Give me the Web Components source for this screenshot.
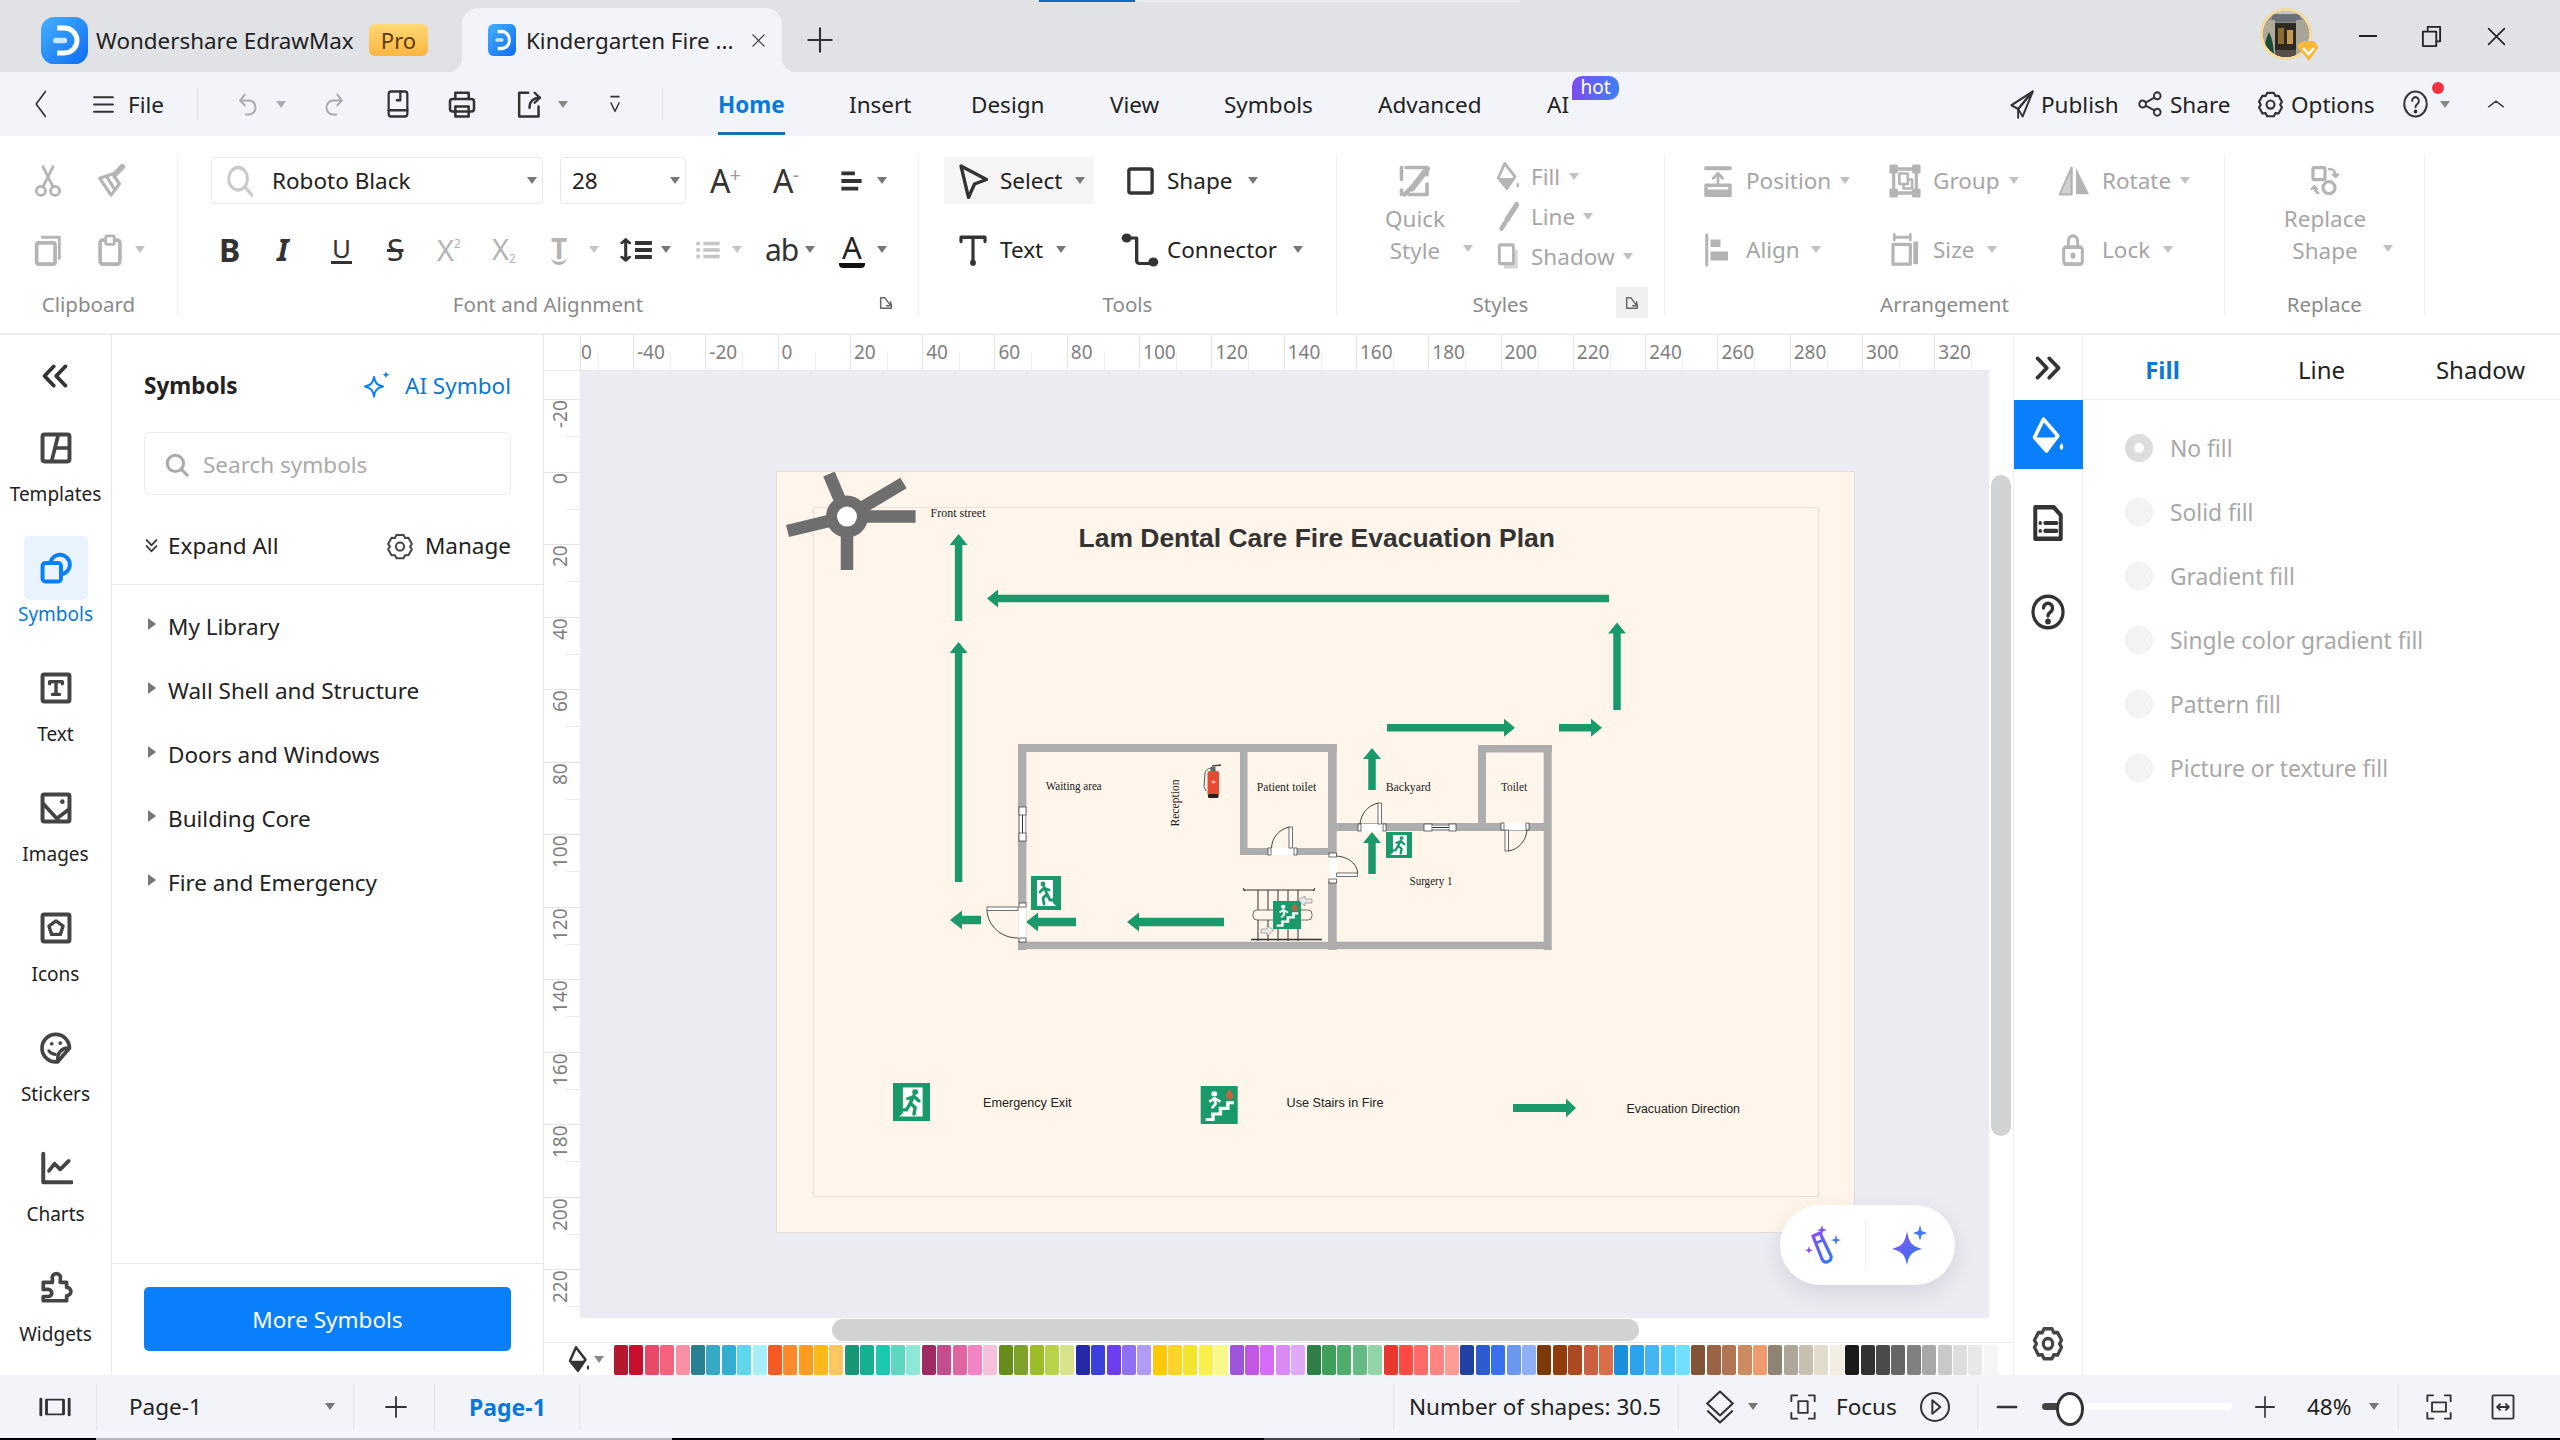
<!DOCTYPE html>
<html lang="en">
<head>
<meta charset="utf-8">
<title>Wondershare EdrawMax</title>
<style>
  html, body { margin: 0; height: 100%; overflow: hidden; background: #fff; }
  body { font-family: "Noto Sans", "Open Sans", sans-serif; font-size: 22.500px; color: #222; }
</style>
</head>
<body>
<app-shell>
  <title-bar></title-bar>
  <menu-bar></menu-bar>
  <ribbon-bar>
    <rb-group name="clipboard">Clipboard</rb-group>
    <rb-group name="font">Font and Alignment</rb-group>
    <rb-group name="tools">Tools</rb-group>
    <rb-group name="styles">Styles</rb-group>
    <rb-group name="arrange">Arrangement</rb-group>
    <rb-group name="replace">Replace</rb-group>
  </ribbon-bar>
  <main-area>
    <left-rail>
      <rail-item icon="templates">Templates</rail-item>
      <rail-item icon="symbols" active>Symbols</rail-item>
      <rail-item icon="text">Text</rail-item>
      <rail-item icon="images">Images</rail-item>
      <rail-item icon="icons">Icons</rail-item>
      <rail-item icon="stickers">Stickers</rail-item>
      <rail-item icon="charts">Charts</rail-item>
      <rail-item icon="widgets">Widgets</rail-item>
    </left-rail>
    <symbol-panel>
      <tree-row>My Library</tree-row>
      <tree-row>Wall Shell and Structure</tree-row>
      <tree-row>Doors and Windows</tree-row>
      <tree-row>Building Core</tree-row>
      <tree-row>Fire and Emergency</tree-row>
    </symbol-panel>
    <canvas-area></canvas-area>
    <right-rail></right-rail>
    <fill-panel>
      <fill-option checked>No fill</fill-option>
      <fill-option>Solid fill</fill-option>
      <fill-option>Gradient fill</fill-option>
      <fill-option>Single color gradient fill</fill-option>
      <fill-option>Pattern fill</fill-option>
      <fill-option>Picture or texture fill</fill-option>
    </fill-panel>
  </main-area>
  <status-bar></status-bar>
  <task-strip></task-strip>
</app-shell>

<script>
const ICONS = {
  back: '<path d="M20 2L5 12l15 10"/>',
  burger: '<path d="M3 5h18M3 12h18M3 19h18"/>',
  undo: '<path d="M8 4L4 9l4 4"/><path d="M4 9h8a6 6 0 0 1 0 12H9"/>',
  redo: '<path d="M16 4l4 5-4 4"/><path d="M20 9h-8a6 6 0 0 0 0 12h3"/>',
  save: '<rect x="4" y="2" width="16" height="20" rx="2"/><path d="M14 2v7h-3"/><path d="M4 17h16"/>',
  print: '<path d="M7 8V3h10v5"/><rect x="3" y="8" width="18" height="10" rx="2"/><rect x="7" y="14" width="10" height="8"/>',
  exportf: '<path d="M11 3H4v19h15v-8"/><path d="M12 15c0-5 3-8 8-8"/><path d="M16 3l4 4-4 4"/>',
  custom: '<path d="M6 4h12"/><path d="M6 11l6 9 6-9"/>',
  cut: '<circle cx="7" cy="19" r="3.2"/><circle cx="17" cy="19" r="3.2"/><path d="M8.5 16L15.5 2M15.5 16L8.5 2"/>',
  painter: '<path d="M4 10l9-3 5 7-6 8z"/><path d="M9 9l5 8" /><path d="M15 7l5-5" stroke-width="4"/>',
  copy: '<rect x="4" y="7" width="13" height="15" rx="1.5" stroke-width="2.6"/><path d="M8 3h12v15"/>',
  paste: '<rect x="5" y="5" width="14" height="17" rx="2" stroke-width="2.6"/><rect x="9" y="2" width="6" height="6" rx="1" fill="#fff"/>',
  search: '<circle cx="10.5" cy="10.5" r="7.5"/><path d="M16 16l5.5 5.5"/>',
  alignl: '<path d="M3 5h12M3 12h18M3 19h15" stroke-width="3.6" stroke-linecap="butt"/>',
  spacing: '<path d="M5 3v18M2.5 6L5 3l2.5 3M2.5 18L5 21l2.5-3" stroke-width="2"/><path d="M11 6h11M11 12h11M11 18h11" stroke-width="3.6" stroke-linecap="butt"/>',
  bullets: '<path d="M8 6h14M8 12h14M8 18h14" stroke-width="3.4" stroke-linecap="butt"/><path d="M2 6h3M2 12h3M2 18h3" stroke-width="3.4" stroke-linecap="butt"/>',
  pointer: '<path d="M4 2l17 9-8 3-4 9z" stroke-width="2.2"/>',
  square: '<rect x="3" y="3" width="18" height="18" rx="1.5" stroke-width="2.6"/>',
  ttool: '<path d="M3 6V3h18v3M12 3v18" stroke-width="2.4"/><circle cx="12" cy="21" r="1.2" fill="currentColor"/>',
  connector: '<circle cx="4" cy="4" r="2" fill="currentColor"/><path d="M6 4h4v15q0 2 2 2h6" stroke-width="2"/><circle cx="20" cy="20" r="2" fill="currentColor"/>',
  launcher: '<path d="M10 4H4v16h16v-6" stroke-width="2.2"/><path d="M11 5l8 11M13 16h6v-6" stroke-width="2.2"/>',
  quick: '<path d="M6 3h14v5M20 14v7H8" stroke-width="2.4"/><path d="M3 3v8M3 18v3" stroke-width="2.4"/><path d="M20 4L10 17" stroke-width="4"/><path d="M9 17l-4 4" stroke-width="3"/>',
  bucket: '<path d="M9 2l9.5 10.5L11 22l-8-8.500z" stroke-width="2.4"/><path d="M4 13.500h14.500L11 22z" fill="currentColor" stroke="none"/><path d="M21 17c1.400 2 1.800 3 0 4.400-1.800-1.400-1.400-2.400 0-4.400z" fill="currentColor" stroke="none"/>',
  pen: '<path d="M20 3L11 15" stroke-width="4.500"/><path d="M9 18l-3 4" stroke-width="4"/>',
  shadow: '<rect x="8" y="7" width="13" height="15" rx="1" fill="currentColor" opacity=".55" stroke="none"/><rect x="4" y="3" width="13" height="15" rx="1" fill="#fff" stroke-width="2.6"/>',
  position: '<path d="M3 3h18" stroke-width="2.8"/><path d="M12 15V7M8.500 10L12 6.500l3.500 3.500" stroke-width="2"/><rect x="3" y="15" width="18" height="7" fill="none" stroke-width="2.600"/><rect x="3" y="18" width="18" height="4" fill="currentColor" stroke="none"/>',
  group: '<rect x="4" y="4" width="16" height="16" stroke-width="2.2"/><rect x="2" y="2" width="4" height="4" fill="currentColor"/><rect x="18" y="2" width="4" height="4" fill="currentColor"/><rect x="2" y="18" width="4" height="4" fill="currentColor"/><rect x="18" y="18" width="4" height="4" fill="currentColor"/><rect x="8" y="7" width="6" height="7" stroke-width="1.800"/><path d="M15 11h2v6h-6v-2" stroke-width="1.800"/>',
  rotate: '<path d="M10 2v20H2z" fill="none" stroke-width="1.600"/><path d="M10 4L3 22h7z" fill="currentColor" stroke="none" opacity=".6"/><path d="M13 2v20h9z" fill="currentColor" stroke="none"/>',
  align: '<path d="M3 2v20" stroke-width="2.400"/><rect x="6" y="5" width="8" height="5" fill="currentColor" stroke="none"/><rect x="6" y="13" width="14" height="6" fill="currentColor" stroke="none"/>',
  size: '<path d="M4 3h12M4 1v4M16 1v4" stroke-width="2"/><rect x="3" y="8" width="13" height="14" stroke-width="2.400"/><path d="M20 6v16" stroke-width="3.600" stroke-linecap="butt"/>',
  lock: '<rect x="4" y="10" width="16" height="12" rx="2" stroke-width="2.600"/><path d="M8 10V6a4 4 0 0 1 8 0v4" stroke-width="2.400"/><circle cx="12" cy="16" r="1.200" fill="currentColor"/>',
  replace: '<rect x="3" y="2" width="9" height="9" rx="1" stroke-width="2.400"/><circle cx="15" cy="17" r="4.500" stroke-width="2.400"/><path d="M15 3c3 0 5 2 5 5M18 7l2 2 2-2" stroke-width="1.800"/><path d="M7 21c-2-.5-3-2-3-5M2 18l2-2 2 2" stroke-width="1.800"/>',
  plane: '<path d="M22 2L3 13l6 3z"/><path d="M22 2l-9 20-4-6z"/><path d="M9 16v7"/>',
  share: '<circle cx="5" cy="12" r="3"/><circle cx="18" cy="5" r="3"/><circle cx="18" cy="19" r="3"/><path d="M8 10.500l7.500-4M8 13.500l7.500 4"/>',
  gear: '<path d="M9 2.500h6l1.300 2.600 2.900-.1 3 5.200-1.600 2.300 1.600 2.300-3 5.200-2.900-.1L15 22.500H9l-1.300-2.600-2.900.1-3-5.200 1.600-2.300-1.600-2.300 3-5.200 2.900.1z"/><circle cx="12" cy="12.500" r="3.500"/>',
  help: '<ellipse cx="12" cy="12" rx="10" ry="10"/><path d="M9 9.500a3 3 0 1 1 4.500 2.600c-1 .6-1.500 1.200-1.500 2.400"/><circle cx="12" cy="18" r=".8" fill="currentColor"/>',
  caret: '<path d="M4 17l8-10 8 10"/>',
  templates: '<rect x="2.500" y="2.500" width="19" height="19" rx="1.500" stroke-width="2.800"/><path d="M13.500 3L9 21M11.500 12H21" stroke-width="2.600" stroke-linecap="butt"/>',
  symbols: '<rect x="2.500" y="8.500" width="13" height="13" rx="2" stroke-width="2.800"/><path d="M8 8a7 7 0 1 1 8 8.500" stroke-width="2.800"/>',
  text: '<rect x="2.500" y="2.500" width="19" height="19" rx="1" stroke-width="2.800"/><path d="M7.500 9V7.500h9V9M12 7.500v9M9.500 16.500h5" stroke-width="2.400"/>',
  images: '<rect x="2.500" y="2.500" width="19" height="19" rx="1" stroke-width="2.800"/><path d="M3 9l11 12M13 19l8-6" stroke-width="2.600"/><circle cx="16.500" cy="7.500" r="1.600" fill="currentColor" stroke="none"/>',
  icons: '<rect x="2.500" y="2.500" width="19" height="19" rx="1" stroke-width="2.800"/><path d="M12 7l5 3.600-1.900 5.900H8.900L7 10.600z" stroke-width="2.400"/>',
  stickers: '<path d="M21.500 12a9.700 9.700 0 1 0-8.300 9.700z" stroke-width="2.600"/><path d="M21.500 12c-5.500-.5-9 3.500-8.300 9.700" stroke-width="2.400"/><circle cx="9" cy="9" r="1.300" fill="currentColor" stroke="none"/><circle cx="15" cy="8.500" r="1.300" fill="currentColor" stroke="none"/><path d="M7 14c1 1.300 2.500 2.300 4.500 2.500" stroke-width="2.200"/>',
  charts: '<path d="M3 2v20h20" stroke-width="2.800"/><path d="M7 14l4-5 4 4 6-6" stroke-width="2.600"/>',
  widgets: '<path d="M9.500 6a3 3 0 1 1 5.500 0v2h4.500v3.500a3 3 0 0 1 0 6V21H3v-3h3.500a2.500 2.500 0 0 0 0-5H3V8h6.500z" stroke-width="2.600"/>',
  dleft: '<path d="M11 3l-8 9 8 9M21 3l-8 9 8 9" stroke-width="3.200"/>',
  dright: '<path d="M3 3l8 9-8 9M13 3l8 9-8 9" stroke-width="3.200"/>',
  ddown: '<path d="M4 4l8 7 8-7M4 12l8 7 8-7" stroke-width="2.400"/>',
  doc: '<path d="M3 2h13l5 5v15H3z" stroke-width="2.800"/><path d="M10 12h8M10 17h8" stroke-width="2.600"/><circle cx="6.500" cy="12" r="1.200" fill="currentColor" stroke="none"/><circle cx="6.500" cy="17" r="1.200" fill="currentColor" stroke="none"/>',
  panel: '<path d="M2 3v18M22 3v18" stroke-width="2"/><rect x="6" y="4" width="12" height="16" stroke-width="2"/>',
  plus: '<path d="M12 2v20M2 12h20"/>',
  layers: '<path d="M12 1l9 8.500-9 8.500-9-8.500z"/><path d="M3.500 15l8.500 8 8.500-8"/>',
  focus: '<path d="M7 2H2v5M17 2h5v5M7 22H2v-5M17 22h5v-5"/><rect x="8" y="7" width="8" height="10"/>',
  play: '<circle cx="12" cy="12" r="10.500"/><path d="M10 7l6 5-6 5z"/>',
  minus: '<path d="M2 12h20" stroke-width="2.600"/>',
  fit: '<path d="M7 2H2v5M17 2h5v5M7 22H2v-5M17 22h5v-5"/><rect x="6" y="8" width="12" height="8"/>',
  fitw: '<rect x="3" y="2" width="18" height="20" rx="1"/><path d="M7 12h10M9.500 9.500L7 12l2.500 2.500M14.500 9.500L17 12l-2.500 2.500"/>',
  minimize: '<path d="M2 12h20" stroke-width="2.200"/>',
  restore: '<rect x="3" y="7" width="14" height="15" stroke-width="1.900"/><path d="M8 6V2h13v15h-4" stroke-width="1.900"/>',
  closex: '<path d="M3 3l18 18M21 3L3 21" stroke-width="1.900"/>'
};

// inline svg from the icon table
const ic = (name, w, h = w, color = '#333', sw = 2) =>
  `<svg width="${w}" height="${h}" viewBox="0 0 24 24" fill="none" stroke="currentColor" stroke-width="${sw}" stroke-linecap="round" stroke-linejoin="round" preserveAspectRatio="none" style="display:block;flex:none;color:${color}">${ICONS[name]}</svg>`;

// row of cells that begin at given x values, each cell runs up to the next one
const cells = (start, items) => {
  let out = '';
  if (items[0][0] > start) out += `<div class="c" style="width:${items[0][0] - start}px"></div>`;
  items.forEach((it, i) => {
    const w = items[i + 1] ? (items[i + 1][0] - it[0]) + 'px' : 'auto';
    out += `<div class="c" style="width:${w};${it[2] || ''}">${it[1]}</div>`;
  });
  return out;
};

const ar = (c = '#888') => `<i class="ar" style="border-top-color:${c}"></i>`;
const BASE = `
  :host { display: block; box-sizing: border-box; }
  * { box-sizing: border-box; }
  .c { flex: none; display: flex; align-items: center; height: 100%; white-space: nowrap; }
  .ar { display: block; width: 0; height: 0; border-left: 5px solid transparent; border-right: 5px solid transparent; border-top: 7px solid #888; }
  .div { width: 1px; height: 46px; background: #e2e4ea; }
`;

class Part extends HTMLElement {
  constructor() {
    super();
    this.attachShadow({ mode: 'open' });
  }
  connectedCallback() {
    this.shadowRoot.innerHTML = `<style>${BASE}${this.css()}</style>${this.html()}`;
  }
  css() { return ''; }
  html() { return '<slot></slot>'; }
}

class AppShell extends Part {
  css() { return `:host { width: 2560px; height: 1440px; display: flex; flex-direction: column; }`; }
}

class TitleBar extends Part {
  css() {
    return `
      :host { height: 72px; background: #e0e2e6; position: relative; font-size: 22.400px; }
      .bar { display: flex; height: 100%; padding-top: 8px; }
      .pro { width: 59px; height: 32px; border-radius: 6px; background: linear-gradient(#ffd975, #fbb540); color: #5b3c00; display: flex; align-items: center; justify-content: center; font-size: 22px; }
      .tab { width: 320px; height: 64px; background: #f2f4f9; border-radius: 16px 16px 0 0; display: flex; align-items: center; padding-left: 26px; position: relative; }
      .tab::before, .tab::after { content: ""; position: absolute; bottom: 0; width: 14px; height: 14px; }
      .tab::before { left: -14px; background: radial-gradient(circle at 0 0, transparent 14px, #f2f4f9 14.500px); }
      .tab::after { right: -14px; background: radial-gradient(circle at 100% 0, transparent 14px, #f2f4f9 14.500px); }
      .tab span { margin-left: 10px; width: 225px; }
      .load { position: absolute; left: 1039px; top: 0; width: 96px; height: 2px; background: #0a6ac8; }
      .load2 { position: absolute; left: 1135px; top: 0; width: 385px; height: 2px; background: #e9ebee; }
    `;
  }
  html() {
    const logo = (w, h, r) => `<svg width="${w}" height="${h}" viewBox="0 0 32 32" preserveAspectRatio="none" style="display:block;flex:none"><defs><linearGradient id="lg${w}" x1="0" y1="0" x2="1" y2="1"><stop offset="0" stop-color="#45b0ff"/><stop offset="1" stop-color="#0d6df3"/></linearGradient></defs><rect width="32" height="32" rx="${r}" fill="url(#lg${w})"/><path d="M11 7.500h5a8.500 8.500 0 0 1 0 17h-5" fill="none" stroke="#fff" stroke-width="3.400"/><path d="M10 16h6" stroke="#cfe6ff" stroke-width="3.600" stroke-linecap="round"/></svg>`;
    const avatar = `<svg width="58" height="60" viewBox="0 0 58 60" style="display:block"><defs><clipPath id="av"><circle cx="26" cy="28" r="23"/></clipPath></defs>
      <circle cx="26" cy="28" r="26" fill="#f4dca0"/>
      <g clip-path="url(#av)"><rect width="58" height="60" fill="#8d8f8c"/><rect x="0" y="0" width="58" height="10" fill="#c9c8c0"/><rect x="12" y="8" width="28" height="8" fill="#6c7078"/>
      <rect x="3" y="14" width="12" height="40" fill="#b0aa9a"/><rect x="36" y="14" width="14" height="40" fill="#a8a498"/><rect x="15" y="17" width="21" height="36" fill="#2e2a22"/><rect x="18" y="22" width="6" height="16" fill="#8c6a30"/><rect x="27" y="24" width="6" height="14" fill="#c49a50"/><rect x="15" y="44" width="21" height="10" fill="#55504a"/>
      <path d="M9 26c3 6 5 14 5 26H4c0-12 2-20 5-26z" fill="#1d4a33"/></g>
      <path d="M38 38l6-3h10l4 5v2L49 55 38 42z" fill="#f6b93c"/><path d="M43 42l5.500 6 5.500-6" fill="none" stroke="#fff" stroke-width="2.200"/></svg>`;
    const up = 'margin-top:-8px;height:72px';
    return `<div class="bar">${cells(0, [
      [41, logo(47, 47, 9)],
      [96, 'Wondershare EdrawMax'],
      [369, '<div class="pro">Pro</div>'],
      [462, `<div class="tab">${logo(28, 32, 6)}<span>Kindergarten Fire ...</span>${ic('closex', 15, 15, '#333')}</div>`, 'align-items:flex-end'],
      [806, ic('plus', 28, 28, '#333', 1.8)],
      [2260, avatar, up],
      [2358, ic('minimize', 20, 20, '#222'), up],
      [2420, ic('restore', 23, 23, '#222'), up],
      [2486, ic('closex', 21, 21, '#222'), up]
    ])}</div><i class="load"></i><i class="load2"></i>`;
  }
}

class MenuBar extends Part {
  css() {
    return `
      :host { height: 64px; background: #f2f4f9; }
      .bar { display: flex; height: 100%; }
      .home { color: #0a78d8; font-weight: 700; position: relative; height: 100%; display: flex; align-items: center; }
      .home::after { content: ""; position: absolute; left: 0; right: 0; bottom: 1px; height: 3px; background: #1a6fa8; }
      .ai { position: relative; }
      .hot { position: absolute; left: 25px; top: -13px; width: 47px; height: 24px; border-radius: 10px 10px 10px 0; background: linear-gradient(90deg, #7d4cf0, #3f7ff3); color: #fff; font-size: 19px; line-height: 22px; text-align: center; }
      .dot { position: absolute; left: 30px; top: -7px; width: 12px; height: 12px; border-radius: 50%; background: #f5333f; }
      .help { position: relative; display: block; }
      .vd { width: 1px; height: 32px; background: #e0e2e8; }
    `;
  }
  html() {
    return `<div class="bar">${cells(0, [
      [33, ic('back', 15, 30, '#333', 1.800)],
      [91, ic('burger', 25, 25, '#333', 2)],
      [128, 'File'],
      [197, '<i class="vd"></i>'],
      [236, ic('undo', 26, 28, '#aaa', 1.800)],
      [276, ar('#aaa')],
      [320, ic('redo', 26, 28, '#aaa', 1.800)],
      [384, ic('save', 28, 30, '#333', 1.900)],
      [446, ic('print', 32, 30, '#333', 1.900)],
      [514, ic('exportf', 31, 30, '#333', 1.900)],
      [558, ar('#888')],
      [607, ic('custom', 16, 22, '#333', 2)],
      [662, '<i class="vd"></i>'],
      [718, '<span class="home">Home</span>'],
      [849, 'Insert'],
      [971, 'Design'],
      [1110, 'View'],
      [1224, 'Symbols'],
      [1378, 'Advanced'],
      [1547, '<span class="ai">AI<span class="hot">hot</span></span>'],
      [2008, ic('plane', 27, 30, '#333', 1.700)],
      [2041, 'Publish'],
      [2137, ic('share', 27, 28, '#333', 1.700)],
      [2170, 'Share'],
      [2257, ic('gear', 27, 28, '#333', 1.900)],
      [2291, 'Options'],
      [2402, `<span class="help">${ic('help', 27, 30, '#333', 1.700)}<i class="dot"></i></span>`],
      [2440, ar('#888')],
      [2485, ic('caret', 22, 14, '#333', 1.800)]
    ])}</div>`;
  }
}

class RibbonBar extends Part {
  css() {
    return `:host { height: 199px; background: #fff; border-bottom: 2px solid #eeeeee; display: flex; }`;
  }
}

// ribbon content per group
const DIM = '#b4b4b4', INK = '#333', GREY_TXT = '#a6a6a6';
const txt = (s, c) => `<span style="color:${c}">${s}</span>`;
const glyph = (s, css) => `<span style="line-height:1;${css}">${s}</span>`;
const GROUPS = {
  clipboard: {
    x: 0, w: 178, rows: [
      [[31, ic('cut', 34, 34, DIM, 2)], [94, ic('painter', 34, 34, DIM, 2.200)]],
      [[31, ic('copy', 34, 34, DIM, 2)], [93, ic('paste', 34, 34, DIM, 2)], [135, ar('#c4c4c4')]]
    ]
  },
  font: {
    x: 178, w: 741, launcher: true, rows: [
      [
        [211, `<div class="box" style="width:332px"><span class="sr">${ic('search', 30, 36, '#c8c8c8', 2.200)}</span><span class="bt">Roboto Black</span>${ar('#777')}</div>`],
        [560, `<div class="box" style="width:126px"><span class="bt2">28</span>${ar('#777')}</div>`],
        [710, `<span class="aa">A<sup>+</sup></span>`],
        [773, `<span class="aa">A<sup>-</sup></span>`],
        [838, ic('alignl', 27, 26, INK, 2)],
        [877, ar('#777')]
      ],
      [
        [219, glyph('B', 'font-size:32px;font-weight:700;color:#333')],
        [277, glyph('I', 'font-size:30px;font-weight:700;font-style:italic;color:#333')],
        [331, glyph('U', 'font-size:26px;color:#333;border-bottom:3px solid #333;padding:0 1px')],
        [382, glyph('S', 'font-size:30px;color:#333;text-decoration:line-through;padding:0 5px')],
        [437, glyph('X<sup style="font-size:12px;vertical-align:13px">2</sup>', `font-size:29px;color:${DIM}`)],
        [492, glyph('X<sub style="font-size:12px;vertical-align:-3px">2</sub>', `font-size:29px;color:${DIM}`)],
        [551, glyph('T', `font-size:28px;font-weight:700;color:${DIM};border-bottom:3px solid ${DIM};border-radius:0 0 8px 8px`)],
        [589, ar('#c4c4c4')],
        [618, ic('spacing', 37, 28, INK, 2)],
        [661, ar('#777')],
        [694, ic('bullets', 28, 26, '#c4c4c4', 2)],
        [732, ar('#c4c4c4')],
        [765, glyph('ab', 'font-size:30px;color:#333;letter-spacing:-1px')],
        [805, ar('#777')],
        [839, glyph('A', 'font-size:31px;color:#222;border-bottom:5px solid #111;padding:0 3px;border-radius:0 0 4px 4px')],
        [877, ar('#777')]
      ]
    ]
  },
  tools: {
    x: 919, w: 418, rows: [
      [
        [944, `<div class="sel">${ic('pointer', 36, 36, INK, 2)}<span style="margin-left:9px;margin-right:13px">Select</span>${ar('#777')}</div>`],
        [1125, ic('square', 31, 32, INK, 2)],
        [1167, 'Shape'],
        [1248, ar('#777')]
      ],
      [
        [957, ic('ttool', 32, 34, INK, 2)],
        [1000, 'Text'],
        [1056, ar('#777')],
        [1120, ic('connector', 40, 36, INK, 2)],
        [1167, 'Connector'],
        [1293, ar('#777')]
      ]
    ]
  },
  styles: {
    x: 1337, w: 328, launcher: true, hot: true,
    body: `<div class="stack" style="margin-left:48px;width:60px">
        <span class="ico" style="margin:6px 0 4px">${ic('quick', 36, 36, DIM, 2)}</span>
        <span class="ln" style="color:${GREY_TXT}">Quick</span><span class="ln" style="color:${GREY_TXT}">Style</span>
      </div>
      <div style="width:50px;padding:88px 0 0 18px">${ar('#c0c0c0')}</div>
      <div class="tri">
        <div class="row3">${cells(1495, [[1495, ic('bucket', 26, 30, DIM, 2)], [1531, txt('Fill', GREY_TXT)], [1569, ar('#c0c0c0')]])}</div>
        <div class="row3">${cells(1495, [[1495, ic('pen', 26, 30, DIM, 2)], [1531, txt('Line', GREY_TXT)], [1583, ar('#c0c0c0')]])}</div>
        <div class="row3">${cells(1495, [[1495, ic('shadow', 26, 30, DIM, 2)], [1531, txt('Shadow', GREY_TXT)], [1623, ar('#c0c0c0')]])}</div>
      </div>`
  },
  arrange: {
    x: 1665, w: 560, rows: [
      [
        [1702, ic('position', 32, 34, DIM, 2)], [1746, txt('Position', GREY_TXT)], [1840, ar('#c0c0c0')],
        [1888, ic('group', 34, 36, DIM, 2)], [1933, txt('Group', GREY_TXT)], [2009, ar('#c0c0c0')],
        [2057, ic('rotate', 35, 32, DIM, 2)], [2102, txt('Rotate', GREY_TXT)], [2180, ar('#c0c0c0')]
      ],
      [
        [1703, ic('align', 30, 36, DIM, 2)], [1746, txt('Align', GREY_TXT)], [1811, ar('#c0c0c0')],
        [1889, ic('size', 32, 34, DIM, 2)], [1933, txt('Size', GREY_TXT)], [1987, ar('#c0c0c0')],
        [2059, ic('lock', 28, 34, DIM, 2)], [2102, txt('Lock', GREY_TXT)], [2163, ar('#c0c0c0')]
      ]
    ]
  },
  replace: {
    x: 2225, w: 199.500,
    body: `<div class="stack" style="margin-left:60px;width:80px">
        <span class="ico" style="margin:8px 0 6px">${ic('replace', 32, 32, DIM, 2)}</span>
        <span class="ln" style="color:${GREY_TXT}">Replace</span><span class="ln" style="color:${GREY_TXT}">Shape</span>
      </div>
      <div style="padding:88px 0 0 18px">${ar('#c0c0c0')}</div>`
  }
};

class RbGroup extends Part {
  css() {
    const g = GROUPS[this.getAttribute('name')];
    return `
      :host { flex: none; width: ${g.w}px; height: 160px; margin-top: 19px; border-right: 1px solid #eeeeee; }
      .body { height: 118px; padding-top: 2px; display: flex; }
      .rows { display: flex; flex-direction: column; gap: 22px; }
      .row { display: flex; height: 47px; }
      .label { height: 30px; margin-top: 16px; text-align: center; line-height: 30px; font-size: 20.500px; color: #8a8a8a; position: relative; }
      .launch { position: absolute; right: 16px; top: -2px; width: 32px; height: 31px; display: flex; align-items: center; justify-content: center; ${g.hot ? 'background:#f0f0f0;' : ''} }
      .box { height: 47px; border: 1px solid #e8e8e8; border-radius: 4px; display: flex; align-items: center; padding-right: 5px; }
      .sr { margin-left: 13px; }
      .bt { margin-left: 17px; flex: 1; }
      .bt2 { margin-left: 11px; flex: 1; }
      .aa { font-size: 32px; color: #333; line-height: 1; }
      .aa sup { font-size: 20px; color: #999; vertical-align: 11px; line-height: 0; margin-left: -1px; }
      .sel { width: 150px; height: 47px; background: #f5f5f5; display: flex; align-items: center; padding-left: 11px; }
      .stack { display: flex; flex-direction: column; align-items: center; flex: none; }
      .ln { height: 32px; line-height: 32px; }
      .ico { display: block; }
      .tri { display: flex; flex-direction: column; margin-top: -1px; }
      .row3 { display: flex; height: 40px; flex: none; }
    `;
  }
  html() {
    const g = GROUPS[this.getAttribute('name')];
    const body = g.body || `<div class="rows">${g.rows.map(r => `<div class="row">${cells(g.x, r)}</div>`).join('')}</div>`;
    const launch = g.launcher ? `<span class="launch">${ic('launcher', 16, 16, '#666', 2)}</span>` : '';
    return `<div class="body">${body}</div><div class="label"><slot></slot>${launch}</div>`;
  }
}

class MainArea extends Part {
  css() { return `:host { height: 1040px; display: flex; }`; }
}

class LeftRail extends Part {
  css() {
    return `
      :host { flex: none; width: 112px; border-right: 1px solid #e8e8e8; }
      .top { height: 81px; display: flex; align-items: center; justify-content: center; padding-right: 1px; }
    `;
  }
  html() { return `<div class="top">${ic('dleft', 28, 26, '#333', 2)}</div><slot></slot>`; }
}

class RailItem extends Part {
  css() {
    const on = this.hasAttribute('active');
    return `
      :host { height: 120px; text-align: center; font-size: 19px; color: ${on ? '#0a78d8' : '#222'}; }
      .ico { width: 64px; height: 64px; margin: 0 auto; border-radius: 6px; display: flex; align-items: center; justify-content: center; background: ${on ? '#eaf4ff' : 'transparent'}; }
      .lbl { line-height: 26px; margin-top: 1px; }
    `;
  }
  html() {
    const on = this.hasAttribute('active');
    return `<div class="ico">${ic(this.getAttribute('icon'), 34, 34, on ? '#0a7ffb' : '#444', 2)}</div><div class="lbl"><slot></slot></div>`;
  }
}

class SymbolPanel extends Part {
  css() {
    return `
      :host { flex: none; width: 432px; display: flex; flex-direction: column; border-right: 1px solid #e8e8e8; }
      .pad { padding: 0 32px 0 32px; }
      .head { height: 97px; padding-top: 4px; display: flex; align-items: center; justify-content: space-between; }
      .head b { font-size: 22.500px; color: #222; }
      .ai { color: #0a78d8; display: flex; align-items: center; gap: 12px; font-size: 22.500px; }
      .search { height: 63px; border: 1px solid #eaeaea; border-radius: 6px; display: flex; align-items: center; padding: 2px 0 0 19px; gap: 13px; color: #aaa; font-size: 22.500px; }
      .tools { height: 89px; padding-top: 12px; display: flex; align-items: center; font-size: 22.500px; }
      .tools .e { display: flex; align-items: center; gap: 9px; }
      .tools .m { display: flex; align-items: center; gap: 11px; margin-left: auto; }
      .list { padding-top: 9px; flex: 1; }
      .foot { height: 112px; border-top: 1px solid #eaeaea; padding-top: 23px; }
      .btn { height: 64px; background: #0a7ffb; color: #fff; border-radius: 5px; display: flex; align-items: center; justify-content: center; font-size: 22.500px; }
    `;
  }
  html() {
    const star = `<svg width="32" height="32" viewBox="0 0 32 32" style="display:block"><path d="M13 7c1 6 3 8 9 9.500-6 1.500-8 3.500-9 10-1-6.500-3-8.500-9-10 6-1.500 8-3.500 9-9.500z" fill="none" stroke="#0a7ffb" stroke-width="2" stroke-linejoin="round"/><path d="M25 1c.4 2.400 1.100 3.200 3.500 3.700-2.400.5-3.100 1.300-3.500 3.700-.4-2.400-1.100-3.200-3.500-3.700 2.400-.5 3.100-1.300 3.500-3.700z" fill="#0a7ffb"/></svg>`;
    return `
      <div class="pad head"><b>Symbols</b><span class="ai">${star}AI Symbol</span></div>
      <div class="pad"><div class="search">${ic('search', 26, 26, '#aaa', 2.800)}<span>Search symbols</span></div></div>
      <div class="pad"><div class="tools"><span class="e">${ic('ddown', 15, 18, '#333', 2)}Expand All</span><span class="m">${ic('gear', 28, 28, '#444', 1.700)}Manage</span></div></div>
      <div style="border-top:1px solid #eaeaea"></div>
      <div class="list"><slot></slot></div>
      <div class="foot pad"><div class="btn">More Symbols</div></div>`;
  }
}

class TreeRow extends Part {
  css() {
    return `
      :host { height: 64px; display: flex; align-items: center; padding-left: 36px; font-size: 22.500px; color: #222; }
      i { width: 0; height: 0; border-top: 6px solid transparent; border-bottom: 6px solid transparent; border-left: 8px solid #777; margin-right: 12px; margin-top: -4px; }
    `;
  }
  html() { return `<i></i><span><slot></slot></span>`; }
}

class RulerH extends Part {
  css() {
    return `
      :host { height: 36px; overflow: hidden; background: #fff; border-bottom: 1px solid #e8e8e8; font-size: 19px; color: #808080; }
      .r { display: flex; height: 100%; }
      .t { flex: none; width: 72.300px; height: 100%; border-left: 1px solid #e4e4e4; padding-left: 3px; line-height: 34px; position: relative; }
      .t::after { content: ""; position: absolute; left: 36px; bottom: 0; width: 1px; height: 18px; background: #eeeeee; }
      .t.first { width: 53px; padding-left: 0; }
      .t.first::after { left: 17px; }
    `;
  }
  html() {
    let s = '<div class="t first">0</div>';
    for (let v = -40; v <= 320; v += 20) s += `<div class="t">${v}</div>`;
    return `<div class="r">${s}</div>`;
  }
}

class RulerV extends Part {
  css() {
    return `
      :host { width: 36px; overflow: hidden; background: #fff; font-size: 19px; color: #808080; }
      .r { padding-top: 28px; }
      .t { height: 72.500px; border-top: 1px solid #e4e4e4; position: relative; padding-left: 4px; }
      .t::after { content: ""; position: absolute; right: 0; top: 36px; width: 14px; height: 1px; background: #e8e8e8; }
      .t span { display: block; writing-mode: vertical-rl; transform: rotate(180deg); line-height: 24px; width: 24px; height: 40px; text-align: right; }
    `;
  }
  html() {
    let s = '';
    for (let v = -20; v <= 220; v += 20) s += `<div class="t"><span>${v}</span></div>`;
    return `<div class="r">${s}</div>`;
  }
}

const SIGN_MAN = `<rect x="8" y="4" width="16" height="26" fill="#fff"/><path d="M5 30l3-3v3z" fill="#fff"/><circle cx="18" cy="8" r="2.400" fill="#1a9a6b"/><path d="M17 11l-3 7 4 4-1 6M14 18l-3 6H7M17 12l-5 2M17 12l4 4" fill="none" stroke="#1a9a6b" stroke-width="2.800" stroke-linecap="round" stroke-linejoin="round"/>`;
const SIGN_STAIR = `<path d="M4 30h6v-5h6v-5h6v-5h5" fill="none" stroke="#fff" stroke-width="2.800"/><circle cx="11" cy="7" r="2.400" fill="#fff"/><path d="M11 10l1 6-3 4M11 11l5 3M11 11l-4 3" fill="none" stroke="#fff" stroke-width="2.200"/><path d="M23 3c3 3 4 6 3 8-1 1.500-4 1.500-5 0-1-2 0-5 2-8z" fill="#c4633f"/>`;

class FloorPlan extends Part {
  css() {
    return `
      :host { position: absolute; left: 197px; top: 101px; width: 1077px; height: 760px; background: #fff5ea; box-shadow: 0 0 0 1px #e2ddd6; }
      svg { display: block; }
      text { font-family: "Liberation Serif", serif; font-size: 13px; fill: #222; }
      .s { font-family: "Liberation Sans", sans-serif; font-size: 12px; }
      .t { font-family: "Liberation Sans", sans-serif; font-size: 26px; font-weight: 700; fill: #333; }
    `;
  }
  html() {
    const G = '#adadad', A = '#1a9a6b';
    const arrow = (x1, y1, x2, y2, sw = 7.500, hw = 18, hl = 11) => {
      const p = [];
      if (y1 === y2) {
        const d = x2 > x1 ? 1 : -1, b = x2 - d * hl;
        p.push([x1, y1 - sw / 2], [b, y1 - sw / 2], [b, y1 - hw / 2], [x2, y1], [b, y1 + hw / 2], [b, y1 + sw / 2], [x1, y1 + sw / 2]);
      } else {
        const d = y2 > y1 ? 1 : -1, b = y2 - d * hl;
        p.push([x1 - sw / 2, y1], [x1 - sw / 2, b], [x1 - hw / 2, b], [x1, y2], [x1 + hw / 2, b], [x1 + sw / 2, b], [x1 + sw / 2, y1]);
      }
      return `<polygon points="${p.map(q => q.join(',')).join(' ')}" fill="${A}"/>`;
    };
    const wall = (x, y, w, h, c = G) => `<rect x="${x}" y="${y}" width="${w}" height="${h}" fill="${c}"/>`;
    const box = (x, y, w, h) => `<rect x="${x}" y="${y}" width="${w}" height="${h}" fill="#fff" stroke="#333" stroke-width=".7"/>`;
    const arc = d => `<path d="${d}" fill="none" stroke="#333" stroke-width=".9"/>`;
    const sign = (x, y, w, h, inner, flip) => `<g transform="translate(${x} ${y})"><rect width="${w}" height="${h}" fill="${A}"/><svg width="${w}" height="${h}" viewBox="0 0 30 34" preserveAspectRatio="none">${flip ? `<g transform="translate(30 0) scale(-1 1)">${inner}</g>` : inner}</svg></g>`;
    const arm = (x, y) => `<line x1="847" y1="516.600" x2="${x}" y2="${y}" stroke="#6e6e6e" stroke-width="12.500"/>`;
    const ll = (x1, y1, x2, y2) => `<line x1="${x1}" y1="${y1}" x2="${x2}" y2="${y2}" stroke="#333" stroke-width="1"/>`;
    let stairs = '';
    for (let x = 1258; x <= 1307; x += 10) stairs += ll(x, 890, x, 941);
    return `<svg width="1077" height="760" viewBox="777 472 1077 760">
      <rect x="813.500" y="507.500" width="1005" height="689" fill="none" stroke="#e6e0d8"/>
      ${arm(915.600, 516.600)}${arm(903.500, 483)}${arm(829, 474)}${arm(787.500, 531)}${arm(847, 570)}
      <circle cx="847" cy="516.600" r="21" fill="#6e6e6e"/><circle cx="847" cy="516.600" r="10" fill="#fff"/>
      <text x="930.500" y="516.500" textLength="55" lengthAdjust="spacingAndGlyphs" style="font-size:12px">Front street</text>
      <text class="t" x="1078.500" y="547" textLength="476.500" lengthAdjust="spacingAndGlyphs">Lam Dental Care Fire Evacuation Plan</text>

      ${arrow(958.600, 621, 958.600, 534)}${arrow(958.600, 882, 958.600, 642)}
      ${arrow(1609, 598.400, 987, 598.400)}${arrow(1617, 710, 1617, 622.500)}
      ${arrow(1387, 727.800, 1515, 727.800)}${arrow(1559, 727.800, 1602, 727.800)}
      ${arrow(1372, 790, 1372, 748)}${arrow(1372, 874, 1372, 832)}
      ${arrow(1224, 922, 1127, 922, 8.500, 19, 12)}${arrow(1076, 922, 1026, 922, 8.500, 19, 12)}${arrow(981, 920, 950, 920, 8.500, 19, 12)}

      ${wall(1018, 744, 318.700, 8)}${wall(1018, 744, 8.400, 206)}${wall(1328, 744, 8.700, 111)}${wall(1328, 881, 8.700, 69)}
      ${wall(1240, 744, 7.500, 111)}${wall(1240, 848, 96, 7)}${wall(1336, 823, 208, 8)}
      ${wall(1478, 745, 8, 78)}${wall(1478, 745, 74, 7.500)}${wall(1543.700, 745, 8, 205)}${wall(1018, 941.700, 533, 7.500)}

      ${wall(1020, 815, 5, 18, '#fff')}${box(1019, 807, 7, 8)}${box(1019, 833, 7, 8)}${ll(1022.500, 815, 1022.500, 833)}
      ${wall(1018.300, 903, 8, 38, '#fff')}${box(1019, 903, 7, 4)}${box(1019, 938, 7, 4)}
      ${box(987, 907, 31, 3.500)}${arc('M987 910.500C988 926 1001 938 1018 938')}

      ${wall(1268, 848, 29, 7, '#fff')}${box(1268, 848, 3, 7)}${box(1294, 848, 3, 7)}
      ${box(1289, 827, 3.500, 21)}${arc('M1289 827C1278 830 1272 838 1271.500 848')}

      ${wall(1358, 824, 28, 7, '#fff')}${box(1358, 824, 3, 7)}${box(1383, 824, 3, 7)}
      ${box(1378, 803, 3.500, 21)}${arc('M1378 803C1367 806 1361 814 1360 824')}

      ${wall(1329, 855, 8, 26, '#fff')}${box(1329, 853, 7.500, 4)}${box(1329, 879, 7.500, 4)}
      ${box(1336.700, 873, 21, 3.500)}${arc('M1336.700 856C1349 857 1357 864 1357.700 873')}

      ${box(1424, 824, 8, 7)}${box(1449, 824, 7, 7)}${wall(1432, 826, 17, 3, '#fff')}${ll(1432, 827.500, 1449, 827.500)}

      ${wall(1501, 823, 28, 7, '#fff')}${box(1501, 823, 3, 7)}${box(1526, 823, 3, 7)}
      ${box(1505, 830, 3.500, 21)}${arc('M1508.500 851C1519 849 1526 841 1527 830')}

      ${stairs}
      ${ll(1243, 890, 1315, 890)}${ll(1243, 888, 1245, 891)}${ll(1315, 888, 1313, 891)}
      <line x1="1251" y1="939.500" x2="1322" y2="939.500" stroke="#333" stroke-width="1.600"/>
      <rect x="1253" y="910" width="59" height="10" rx="4" fill="#fff5ea" stroke="#333" stroke-width=".7"/>
      ${sign(1273, 901, 28, 28, SIGN_STAIR)}
      <polygon points="1298,900 1305,896 1305,899 1312,899 1312,903 1305,903 1305,906" fill="#e8e8e8" stroke="#666" stroke-width=".5"/>
      <polygon points="1274,930 1267,926 1267,929 1261,929 1261,933 1267,933 1267,936" fill="#e8e8e8" stroke="#666" stroke-width=".5"/>

      ${sign(1031, 876, 30, 34, SIGN_MAN, true)}
      ${sign(1386, 832, 26, 26, SIGN_MAN)}

      <path d="M1214 769c-4-2-8 0-9 4l-1 14 2 4" fill="none" stroke="#444" stroke-width=".9"/>
      <path d="M1212 766l9-1" stroke="#444" stroke-width="1.400"/>
      <rect x="1210.500" y="767" width="5" height="5" fill="#666"/>
      <rect x="1207.500" y="771" width="11.500" height="25" rx="2" fill="#ea4a34"/>
      <rect x="1208" y="794" width="10.500" height="4" rx="1.500" fill="#222"/>
      <path d="M1211 782h5M1213.500 780v4" stroke="#fff" stroke-width=".7"/>

      <text x="1045.800" y="789.500" textLength="56" lengthAdjust="spacingAndGlyphs">Waiting area</text>
      <text transform="translate(1179 826.500) rotate(-90)" textLength="47" lengthAdjust="spacingAndGlyphs">Reception</text>
      <text x="1256.700" y="790.500" textLength="59.500" lengthAdjust="spacingAndGlyphs">Patient toilet</text>
      <text x="1385.700" y="790.500" textLength="45" lengthAdjust="spacingAndGlyphs">Backyard</text>
      <text x="1501" y="790.500" textLength="26" lengthAdjust="spacingAndGlyphs">Toilet</text>
      <text x="1409.500" y="884.500" textLength="43" lengthAdjust="spacingAndGlyphs">Surgery 1</text>

      ${sign(893, 1083, 37, 38, SIGN_MAN)}
      ${sign(1200.700, 1086, 37, 38, SIGN_STAIR)}
      ${arrow(1513, 1108, 1576, 1108, 8, 19, 10)}
      <text class="s" x="983" y="1107" textLength="88.500" lengthAdjust="spacingAndGlyphs">Emergency Exit</text>
      <text class="s" x="1286.500" y="1107" textLength="97" lengthAdjust="spacingAndGlyphs">Use Stairs in Fire</text>
      <text class="s" x="1626.500" y="1113" textLength="113.500" lengthAdjust="spacingAndGlyphs">Evacuation Direction</text>
    </svg>`;
  }
}

class AiPill extends Part {
  css() {
    return `
      :host { position: absolute; left: 1200px; top: 834px; width: 175px; height: 80px; background: #fff; border-radius: 40px; box-shadow: 0 8px 22px rgba(70, 70, 100, .14); display: flex; align-items: center; }
      span { flex: 1; display: flex; justify-content: center; }
      i { width: 1px; height: 50px; background: #f0f0f4; }
    `;
  }
  html() {
    const defs = id => `<defs><linearGradient id="${id}" x1="0" y1="0" x2="1" y2="1"><stop offset="0" stop-color="#8a4df0"/><stop offset="1" stop-color="#2f7bf5"/></linearGradient></defs>`;
    return `<span><svg width="38" height="40" viewBox="0 0 38 40" style="display:block">${defs('pa')}
        <path d="M9 11l7-3 11 23c1 3-1 5-4 6s-4-1-5-3z" fill="none" stroke="url(#pa)" stroke-width="3.200" stroke-linejoin="round"/>
        <path d="M12 18l7-3" stroke="url(#pa)" stroke-width="2.500"/>
        <path d="M18 0l1.200 3.800L23 5l-3.800 1.200L18 10l-1.200-3.800L13 5l3.800-1.200z" fill="#7a55ef"/>
        <path d="M32 10l1.200 4L37 15l-3.800 1.200L32 20l-1.200-3.800L27 15l3.800-1z" fill="#3f78f2"/>
        <path d="M5 21l1 3.300 3 1-3 1L5 29l-1-2.700-3-1 3-1z" fill="#8a4df0"/>
      </svg></span><i></i>
      <span style="padding-right:4px"><svg width="40" height="40" viewBox="0 0 40 40" style="display:block">${defs('pb')}
        <path d="M18 6c2 12 5 15 15 18-10 2.500-13 5.500-15 16-2-10.500-5-13.500-15-16 10-3 13-6 15-18z" fill="url(#pb)"/>
        <path d="M31 0l1.600 6L38 8l-5.400 2L31 16l-1.600-6L24 8l5.400-2z" fill="#3f78f2"/>
      </svg></span>`;
  }
}

const SWATCHES = [
  '#b5172e','#c8102e','#e8486a','#f6617f','#f88fa3', '#2a8092','#36a9c4','#33aed0','#5ed7ec','#a7eefb',
  '#f55a22','#fb8a2c','#fe9a1f','#fdb91c','#ffc55e', '#179778','#14b091','#1cc9ae','#5cd7c0','#8ee8d8',
  '#9e2b61','#c44d8b','#e065a0','#f384c4','#f4c0dc', '#678c1a','#7fa32a','#9cbc28','#b8d24a','#d6e38c',
  '#2429a8','#3b40db','#6b3fed','#8e70f0','#b09cf5', '#fdc909','#fdd52a','#f3e52c','#f9f04c','#fbf88a',
  '#9f55d9','#c157e3','#d46cf5','#d98af5','#e0a8f6', '#2d7f43','#3ea05a','#4eaf6d','#66ba83','#93d5a8',
  '#e8382e','#ff4b44','#ff6a66','#ff8380','#ff9b95', '#2242a3','#2f5bd1','#3a6fef','#6b97ee','#8fb0f2',
  '#7a3a08','#913c0a','#ac4a22','#cc5f42','#d96e48', '#1b8fdc','#2ca2ec','#45b4f5','#4fccf8','#6fe0ff',
  '#825437','#9a6444','#b07552','#cc8a60','#f09b6e', '#8e8474','#aea799','#c6c0b1','#e1dccb','#f2eee1',
  '#1a1a1a','#333333','#4a4a4a','#666666','#808080', '#a8a8a8','#c9c9c9','#dedede','#e8e8e8','#f5f5f5'
];

class ColorStrip extends Part {
  css() {
    return `
      :host { height: 33px; border-top: 1px solid #e8e8e8; display: flex; align-items: flex-end; }
      .b { flex: none; width: 70px; height: 100%; display: flex; align-items: center; padding-left: 23px; gap: 3px; }
      .s { display: flex; gap: 1.400px; height: 30px; }
      .s i { flex: none; width: 14px; border-radius: 2px; }
    `;
  }
  html() {
    return `<div class="b">${ic('bucket', 24, 28, '#333', 2.200)}${ar('#888')}</div><div class="s">${SWATCHES.map(c => `<i style="background:${c}"></i>`).join('')}</div>`;
  }
}

class CanvasArea extends Part {
  css() {
    return `
      :host { flex: none; width: 1470px; display: grid; grid-template-columns: 36px 1409px 25px; grid-template-rows: 36px 947px 24px 33px; border-right: 1px solid #eeeeee; }
      .corner { border-bottom: 1px solid #e8e8e8; }
      .stage { position: relative; overflow: hidden; background: #ebebf1; }
      .gut { grid-column: 3; grid-row: 1 / 3; padding: 140px 0 0 2px; }
      .vt { width: 20px; height: 661px; background: #d0d2d4; border-radius: 10px; }
      .hs { grid-column: 1 / 4; grid-row: 3; padding: 1px 0 0 288px; }
      .ht { width: 807px; height: 22px; background: #d0d2d4; border-radius: 11px; }
      color-strip { grid-column: 1 / 4; grid-row: 4; }
    `;
  }
  html() {
    return `
      <div class="corner"></div>
      <ruler-h></ruler-h>
      <div class="gut"><div class="vt"></div></div>
      <ruler-v></ruler-v>
      <div class="stage"><floor-plan></floor-plan><ai-pill></ai-pill></div>
      <div class="hs"><div class="ht"></div></div>
      <color-strip></color-strip>`;
  }
}

class RightRail extends Part {
  css() {
    return `
      :host { flex: none; width: 69px; display: flex; flex-direction: column; align-items: center; border-right: 1px solid #eeeeee; }
      .top { height: 65px; display: flex; align-items: center; justify-content: center; }
      .on { width: 69px; height: 69px; background: #0a7ffb; display: flex; align-items: center; justify-content: center; }
      .i { display: flex; align-items: center; justify-content: center; height: 54px; }
    `;
  }
  html() {
    return `
      <div class="top">${ic('dright', 28, 26, '#333', 2)}</div>
      <div class="on">${ic('bucket', 36, 38, '#fff', 2)}</div>
      <div class="i" style="margin-top:27px">${ic('doc', 34, 38, '#333', 2)}</div>
      <div class="i" style="margin-top:35px">${ic('help', 36, 38, '#333', 2.200)}</div>
      <div class="i" style="margin-top:auto;margin-bottom:5px">${ic('gear', 32, 36, '#444', 2.400)}</div>`;
  }
}

class FillPanel extends Part {
  css() {
    return `
      :host { flex: none; width: 477px; }
      .tabs { height: 65px; display: flex; border-bottom: 1px solid #eeeeee; padding-top: 5px; }
      .tabs span { width: 159px; display: flex; align-items: center; justify-content: center; font-size: 24px; }
      .tabs .on { color: #0a78d8; font-weight: 700; }
      .list { padding-top: 16px; }
    `;
  }
  html() {
    return `<div class="tabs"><span class="on">Fill</span><span>Line</span><span>Shadow</span></div><div class="list"><slot></slot></div>`;
  }
}

class FillOption extends Part {
  css() {
    const on = this.hasAttribute('checked');
    return `
      :host { height: 64px; display: flex; align-items: center; padding-left: 42px; color: #a8a8a8; font-size: 22.800px; }
      i { width: 28px; height: 28px; border-radius: 50%; margin-right: 17px; ${on ? 'border: 9px solid #dcdcdc; background: #fff;' : 'background: #f3f3f3; border: 1px solid #ececec;'} }
    `;
  }
  html() { return `<i></i><span><slot></slot></span>`; }
}

class StatusBar extends Part {
  css() {
    return `
      :host { height: 63px; background: #f2f4f9; }
      .bar { display: flex; height: 100%; }
      .cur { color: #0a78d8; font-weight: 700; font-size: 23px; }
      .track { width: 190px; height: 7px; background: #fff; border-radius: 4px; position: relative; }
      .track::before { content: ""; position: absolute; left: 0; top: 0; width: 26px; height: 7px; background: #444; border-radius: 4px; }
      .track::after { content: ""; position: absolute; left: 14px; top: -11px; width: 22px; height: 28px; border: 3.500px solid #333; border-radius: 50%; background: #fff; }
    `;
  }
  html() {
    const d = '<i class="div"></i>';
    return `<div class="bar">${cells(0, [
      [38, ic('panel', 34, 22, '#333', 1.600)],
      [96, d],
      [129, 'Page-1'],
      [325, ar('#777')],
      [353, d],
      [384, ic('plus', 24, 24, '#333', 1.800)],
      [434, d],
      [469, '<span class="cur">Page-1</span>'],
      [579, d],
      [1393, d],
      [1409, 'Number of shapes: 30.5'],
      [1678, d],
      [1703, ic('layers', 34, 34, '#333', 1.500)],
      [1748, ar('#777')],
      [1789, ic('focus', 28, 28, '#333', 1.600)],
      [1836, 'Focus'],
      [1919, ic('play', 32, 32, '#333', 1.500)],
      [1977, d],
      [1996, ic('minus', 22, 22, '#333', 1.800)],
      [2042, '<div class="track"></div>'],
      [2254, ic('plus', 22, 24, '#333', 1.800)],
      [2307, '48%'],
      [2369, ar('#777')],
      [2398, d],
      [2425, ic('fit', 28, 28, '#333', 1.600)],
      [2489, ic('fitw', 28, 28, '#333', 1.600)]
    ])}</div>`;
  }
}

class TaskStrip extends Part {
  css() { return `:host { height: 2px; background: #000; display: flex; } i { display: block; height: 2px; }`; }
  html() {
    return `<i style="width:96px;background:#000"></i><i style="width:576px;background:#b5b5b5"></i><i style="width:592px;background:#000"></i><i style="width:96px;background:#444"></i>`;
  }
}

const TAGS = {
  'app-shell': AppShell, 'title-bar': TitleBar, 'menu-bar': MenuBar, 'ribbon-bar': RibbonBar, 'rb-group': RbGroup,
  'main-area': MainArea, 'left-rail': LeftRail, 'rail-item': RailItem, 'symbol-panel': SymbolPanel, 'tree-row': TreeRow,
  'ruler-h': RulerH, 'ruler-v': RulerV, 'floor-plan': FloorPlan, 'ai-pill': AiPill, 'color-strip': ColorStrip,
  'canvas-area': CanvasArea, 'right-rail': RightRail, 'fill-panel': FillPanel, 'fill-option': FillOption,
  'status-bar': StatusBar, 'task-strip': TaskStrip
};
Object.keys(TAGS).forEach(t => customElements.define(t, TAGS[t]));
</script>
</body>
</html>
